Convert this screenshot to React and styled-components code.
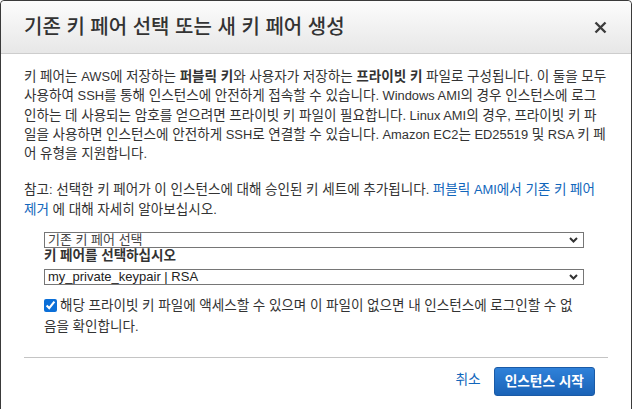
import React, { useState } from 'react';
import styled, { createGlobalStyle } from 'styled-components';

const GlobalStyle = createGlobalStyle`
  html, body {
    margin: 0;
    background: #fff;
    overflow: hidden;
  }
  body {
    font-family: "Liberation Sans", Arial, "Noto Sans CJK KR", sans-serif;
    color: #333;
  }
`;

// hangul in the reference runs at its own width, so runs of it get their own size
const HANGUL = /([\u1100-\u11FF\u3130-\u318F\uAC00-\uD7A3]+)/;

const Hg = styled.span`
  font-family: "Noto Sans CJK KR", sans-serif;
  font-size: ${(p) => p.$scale || 1.0559}em;
  line-height: 1;
`;

const ko = (text, scale) =>
  text.split(HANGUL).map((part, i) =>
    i % 2 === 1 ? (
      <Hg key={i} $scale={scale}>
        {part}
      </Hg>
    ) : (
      part
    )
  );

const Dialog = styled.div`
  box-sizing: border-box;
  width: 632px;
  min-height: 412px;
  background: #fff;
  border: 1px solid #3a3a3a;
  border-radius: 4px 4px 0 0;
`;

const Header = styled.div`
  height: 52px;
  display: flex;
  align-items: center;
  justify-content: space-between;
  padding: 0 23px;
  background: linear-gradient(#fcfcfc, #e7e7e7);
  border-bottom: 1px solid #cdcdcd;
  border-radius: 4px 4px 0 0;
`;

const Title = styled.h2`
  margin: 0;
  font-size: 20px;
  font-weight: 500;
  color: #333;
  line-height: 24px;
`;

const Close = styled.button`
  display: flex;
  align-items: center;
  justify-content: center;
  width: 16px;
  height: 16px;
  padding: 0;
  border: none;
  background: none;
  color: #3c3c3c;
  cursor: pointer;
`;

const Body = styled.div`
  padding: 13px 23px 0;
  font-size: 12.88px;
`;

const Para = styled.p`
  margin: ${(p) => (p.$gap ? '17px' : '0')} 0 0;
  line-height: 19.25px;
  color: #333;
`;

const Link = styled.a`
  color: #1166bb;
  text-decoration: none;
  cursor: pointer;
`;

const Form = styled.div`
  margin: 13px 0 0 20px;
  width: 540px;
`;

const SelectWrap = styled.div`
  position: relative;
  margin-top: ${(p) => p.$top || 0}px;
`;

const Select = styled.select`
  appearance: none;
  display: block;
  box-sizing: border-box;
  width: 100%;
  height: 16px;
  margin: 0;
  padding: 0 20px 0 3px;
  border: 1px solid #767676;
  border-radius: 0;
  background: #fff;
  font-family: "Liberation Sans", Arial, "Noto Sans CJK KR", sans-serif;
  font-size: 13px;
  line-height: 14px;
  color: ${(p) => p.$color};
  outline: none;
`;

const Chevron = styled.svg`
  position: absolute;
  right: 6px;
  top: 5px;
  pointer-events: none;
`;

const Label = styled.div`
  font-weight: 700;
  line-height: 16px;
  color: #333;
`;

const CheckLine = styled.label`
  display: block;
  margin-top: 10px;
  padding-right: 6px;
  line-height: 21px;
  color: #333;
`;

const Check = styled.input`
  width: 13px;
  height: 13px;
  margin: 0 3px 0 0;
  vertical-align: -2px;
  accent-color: #0b6fd8;
`;

const Footer = styled.div`
  margin-top: 20px;
  border-top: 1px solid #c4c4c4;
  display: flex;
  align-items: center;
  justify-content: flex-end;
  gap: 13px;
  padding: 9px 13px 20px 0;
`;

const Cancel = styled.a`
  color: #1166bb;
  font-size: 13px;
  cursor: pointer;
  margin-top: -3px;
`;

const Primary = styled.button`
  height: 29px;
  padding: 0 10px;
  border: 1px solid #1a5aa6;
  border-radius: 3px;
  background: linear-gradient(#2f81d9, #1a63b7);
  color: #fff;
  font-family: "Liberation Sans", Arial, "Noto Sans CJK KR", sans-serif;
  font-size: 13px;
  font-weight: 700;
  cursor: pointer;
`;

const Arrow = () => (
  <Chevron width="9" height="6" viewBox="0 0 9 6">
    <path d="M1 1 L4.5 4.5 L8 1" fill="none" stroke="#333" strokeWidth="2" />
  </Chevron>
);

const App = () => {
  const [mode, setMode] = useState('existing');
  const [pair, setPair] = useState('my_private_keypair');
  const [ack, setAck] = useState(true);

  return (
    <>
      <GlobalStyle />
      <Dialog>
        <Header>
          <Title>{ko('기존 키 페어 선택 또는 새 키 페어 생성', 1)}</Title>
          <Close aria-label="close">
            <svg width="13" height="13" viewBox="0 0 13 13">
              <path d="M1.5 1.5 L11.5 11.5 M11.5 1.5 L1.5 11.5" stroke="currentColor" strokeWidth="2.4" />
            </svg>
          </Close>
        </Header>
        <Body>
          <Para>
            {ko('키 페어는 AWS에 저장하는 ')}
            <b>{ko('퍼블릭 키')}</b>
            {ko('와 사용자가 저장하는 ')}
            <b>{ko('프라이빗 키')}</b>
            {ko(
              ' 파일로 구성됩니다. 이 둘을 모두 사용하여 SSH를 통해 인스턴스에 안전하게 접속할 수 있습니다. Windows AMI의 경우 인스턴스에 로그인하는 데 사용되는 암호를 얻으려면 프라이빗 키 파일이 필요합니다. Linux AMI의 경우, 프라이빗 키 파일을 사용하면 인스턴스에 안전하게 SSH로 연결할 수 있습니다. Amazon EC2는 ED25519 및 RSA 키 페어 유형을 지원합니다.'
            )}
          </Para>
          <Para $gap>
            {ko('참고: 선택한 키 페어가 이 인스턴스에 대해 승인된 키 세트에 추가됩니다. ')}
            <Link>{ko('퍼블릭 AMI에서 기존 키 페어 제거')}</Link>
            {ko(' 에 대해 자세히 알아보십시오.')}
          </Para>
          <Form>
            <SelectWrap>
              <Select $color="#444" value={mode} onChange={(e) => setMode(e.target.value)}>
                <option value="existing">기존 키 페어 선택</option>
                <option value="new">새 키 페어 생성</option>
                <option value="none">키 페어 없이 계속</option>
              </Select>
              <Arrow />
            </SelectWrap>
            <Label>{ko('키 페어를 선택하십시오')}</Label>
            <SelectWrap $top={5}>
              <Select $color="#222" value={pair} onChange={(e) => setPair(e.target.value)}>
                <option value="my_private_keypair">my_private_keypair | RSA</option>
              </Select>
              <Arrow />
            </SelectWrap>
            <CheckLine>
              <Check type="checkbox" checked={ack} onChange={(e) => setAck(e.target.checked)} />
              {ko('해당 프라이빗 키 파일에 액세스할 수 있으며 이 파일이 없으면 내 인스턴스에 로그인할 수 없음을 확인합니다.')}
            </CheckLine>
          </Form>
          <Footer>
            <Cancel>{ko('취소')}</Cancel>
            <Primary>{ko('인스턴스 시작')}</Primary>
          </Footer>
        </Body>
      </Dialog>
    </>
  );
};

export default App;
